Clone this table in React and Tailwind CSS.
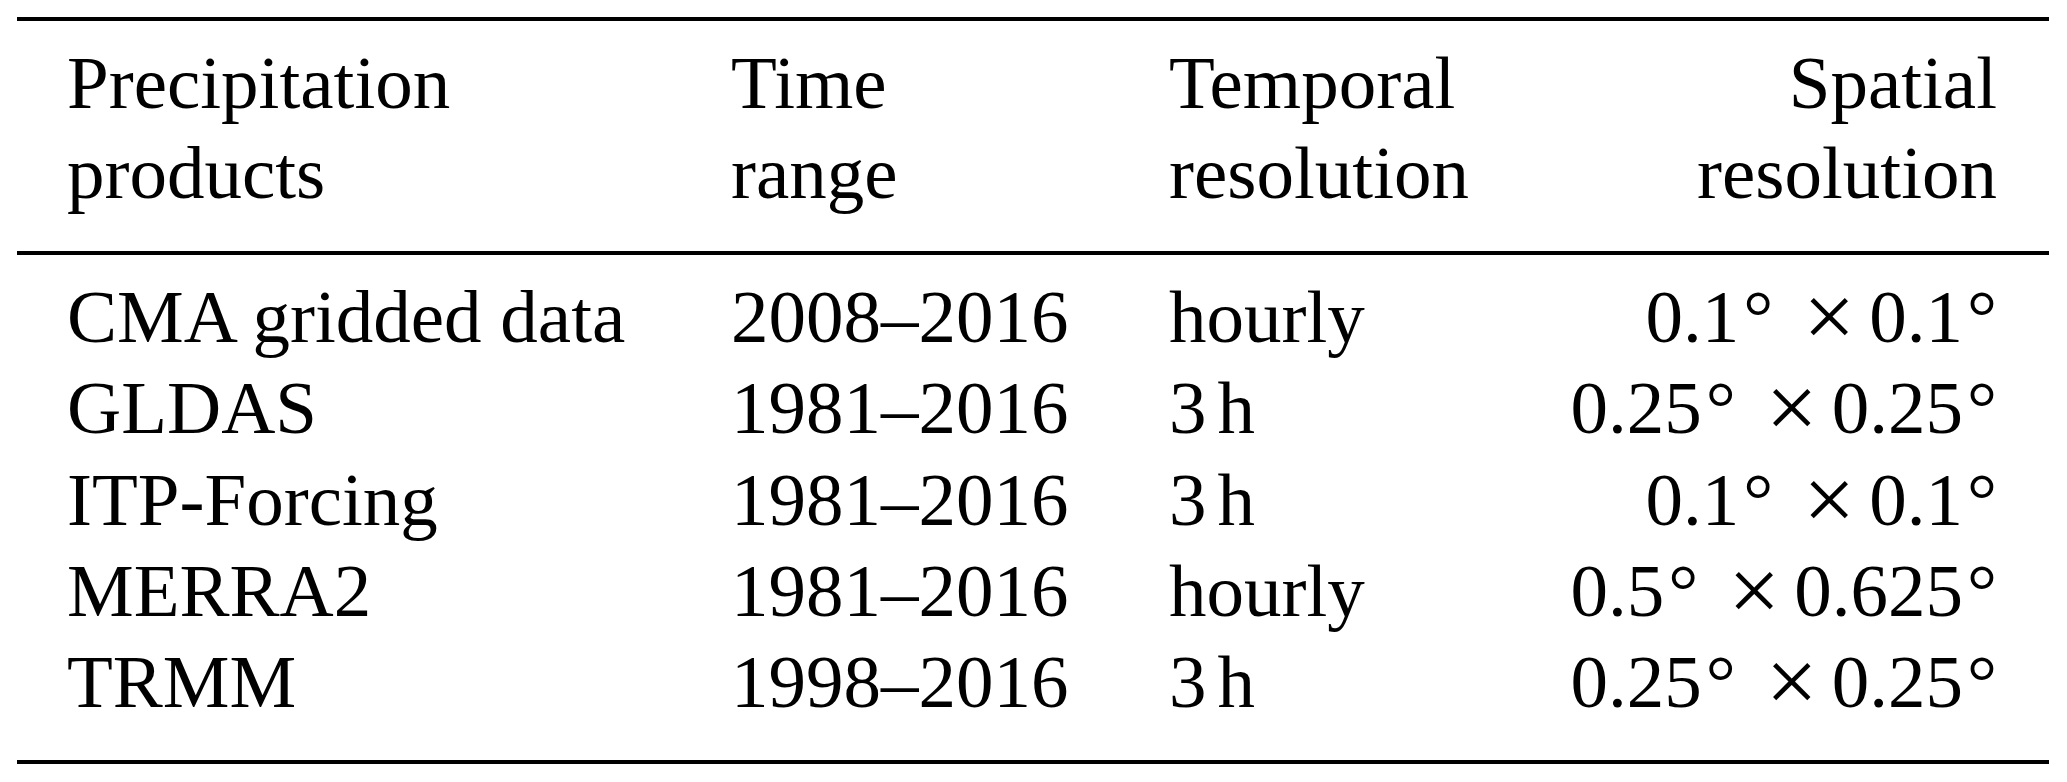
import React from 'react';

const rows = [
  { name: 'CMA gridded data', range: '2008–2016', temporal: 'hourly', a: '0.1', b: '0.1' },
  { name: 'GLDAS', range: '1981–2016', temporal: '3h', a: '0.25', b: '0.25' },
  { name: 'ITP-Forcing', range: '1981–2016', temporal: '3h', a: '0.1', b: '0.1' },
  { name: 'MERRA2', range: '1981–2016', temporal: 'hourly', a: '0.5', b: '0.625' },
  { name: 'TRMM', range: '1998–2016', temporal: '3h', a: '0.25', b: '0.25' }
];

function Temporal({ value }) {
  if (value === '3h') {
    return (
      <span>
        3<span className="ml-[11px]">h</span>
      </span>
    );
  }
  return <span>{value}</span>;
}

function Resolution({ a, b }) {
  return (
    <span className="whitespace-nowrap">
      {a}
      <span className="ml-[4px]">°</span>
      <span className="relative top-[5px] ml-[30px] text-[92px] leading-[0]">×</span>
      <span className="ml-[14px]">{b}</span>
      <span className="ml-[4px]">°</span>
    </span>
  );
}

export default function App() {
  return (
    <div className="w-[2067px] h-[782px] bg-white text-black pt-[17px] pl-[17px] font-['Liberation_Serif','Times_New_Roman',serif] text-[75px]">
      <div className="w-[2032px]">
        {/* top rule */}
        <div className="h-[4px] bg-black"></div>

        {/* header */}
        <div className="grid grid-cols-[664px_438px_1fr_auto] pl-[50px] pr-[52px] pt-[17px] pb-[33px] leading-[90px]">
          <div>
            Precipitation
            <br />
            products
          </div>
          <div>
            Time
            <br />
            range
          </div>
          <div>
            Temporal
            <br />
            resolution
          </div>
          <div className="text-right">
            Spatial
            <br />
            resolution
          </div>
        </div>

        {/* mid rule */}
        <div className="h-[4px] bg-black"></div>

        {/* body */}
        <div className="grid grid-cols-[664px_438px_1fr_auto] pl-[50px] pr-[52px] pt-[16px] pb-[33px] leading-[91.25px]">
          {rows.map((r) => (
            <React.Fragment key={r.name}>
              <div className="whitespace-nowrap">{r.name}</div>
              <div>{r.range}</div>
              <div>
                <Temporal value={r.temporal} />
              </div>
              <div className="text-right">
                <Resolution a={r.a} b={r.b} />
              </div>
            </React.Fragment>
          ))}
        </div>

        {/* bottom rule */}
        <div className="h-[4px] bg-black"></div>
      </div>
    </div>
  );
}
